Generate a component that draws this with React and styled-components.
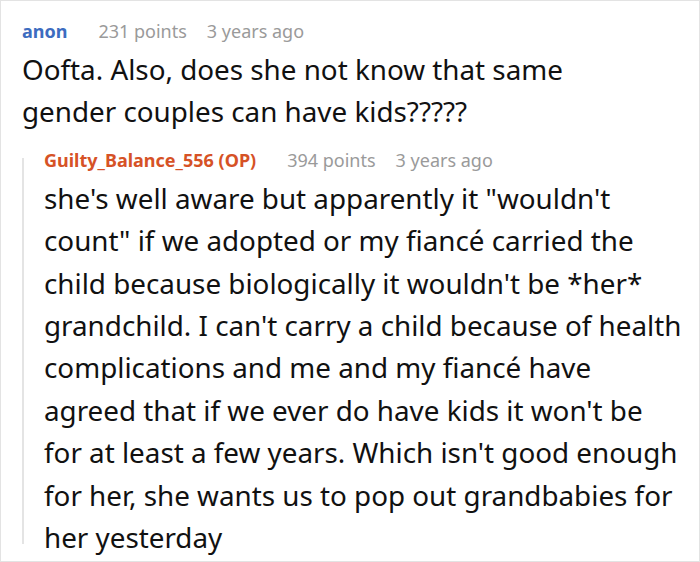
import React from "react";
import styled, { createGlobalStyle } from "styled-components";

const Global = createGlobalStyle`
  html, body { margin: 0; padding: 0; background: #fff; }
  body { font-family: "Noto Sans", "Open Sans", sans-serif; }
`;

const Frame = styled.div`
  box-sizing: border-box;
  width: 700px;
  height: 562px;
  border: 1px solid #e3e3e3;
  background: #fff;
  padding: 17px 14px 0 21px;
  overflow: hidden;
`;

const Comment = styled.div`
  display: flex;
  flex-direction: column;
  max-width: ${(p) => p.$max || "none"};
`;

const Meta = styled.div`
  display: flex;
  align-items: baseline;
  font-size: 18px;
  line-height: 26px;
  color: #9a9a9a;
  margin-bottom: 4px;
`;

const Author = styled.span`
  font-weight: 700;
  color: ${(p) => p.$color};
  margin-right: 31px;
`;

const Stat = styled.span`
  margin-right: 20px;
`;

const Body = styled.p`
  margin: 0;
  font-size: 27.8px;
  line-height: 42.4px;
  color: #111;
`;

const Thread = styled.div`
  display: flex;
  margin-top: 14px;
`;

const Rail = styled.div`
  flex: 0 0 2px;
  margin: 11px 20px 14px 0;
  background: #e4e4e4;
`;

function CommentBlock({ author, color, points, age, children, max }) {
  return (
    <Comment $max={max}>
      <Meta>
        <Author $color={color}>{author}</Author>
        <Stat>{points}</Stat>
        <Stat>{age}</Stat>
      </Meta>
      <Body>{children}</Body>
    </Comment>
  );
}

export default function App() {
  return (
    <>
      <Global />
      <Frame>
        <CommentBlock
          author="anon"
          color="#3d6cc0"
          points="231 points"
          age="3 years ago"
          max="620px"
        >
          Oofta. Also, does she not know that same gender couples can have kids?????
        </CommentBlock>
        <Thread>
          <Rail />
          <CommentBlock
            author="Guilty_Balance_556 (OP)"
            color="#d65226"
            points="394 points"
            age="3 years ago"
          >
            she's well aware but apparently it "wouldn't count" if we adopted or my fiancé
            carried the child because biologically it wouldn't be *her* grandchild. I can't
            carry a child because of health complications and me and my fiancé have agreed
            that if we ever do have kids it won't be for at least a few years. Which isn't
            good enough for her, she wants us to pop out grandbabies for her yesterday
          </CommentBlock>
        </Thread>
      </Frame>
    </>
  );
}
